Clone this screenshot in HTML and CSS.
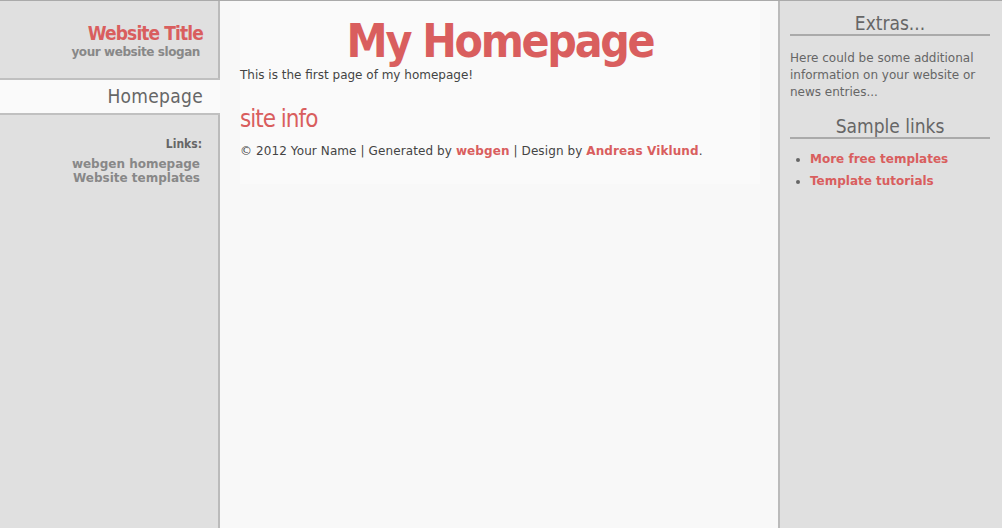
FILE: index.html
```html
<!DOCTYPE html>
<html>
<head>
<meta charset="utf-8">
<title>My Homepage</title>
<link rel="stylesheet" href="styles.css">
</head>
<body>
<div class="page">
  <aside class="left">
    <header class="brand">
      <div class="site-title">Website Title</div>
      <div class="slogan">your website slogan</div>
    </header>
    <nav class="menu">
      <a class="menu-item active" href="#">Homepage</a>
    </nav>
    <div class="links">
      <div class="links-title">Links:</div>
      <a href="#">webgen homepage</a>
      <a href="#">Website templates</a>
    </div>
  </aside>
  <main class="center">
    <div class="content">
      <h1 class="page-title">My Homepage</h1>
      <p class="intro">This is the first page of my homepage!</p>
      <h2 class="section-title">site info</h2>
      <p class="footer">© 2012 Your Name | Generated by <a href="#">webgen</a> | Design by <a href="#">Andreas Viklund</a>.</p>
    </div>
  </main>
  <aside class="right">
    <h3 class="side-title">Extras...</h3>
    <p class="side-text">Here could be some additional information on your website or news entries...</p>
    <h3 class="side-title">Sample links</h3>
    <ul class="side-list">
      <li><a href="#">More free templates</a></li>
      <li><a href="#">Template tutorials</a></li>
    </ul>
  </aside>
</div>
</body>
</html>
```
FILE: styles.css
```css
html, body {
  margin: 0;
  padding: 0;
  height: 100%;
}
body {
  font-family: "DejaVu Sans", Verdana, sans-serif;
  font-size: 12px;
  color: #444;
  background: #f8f8f8;
}
a {
  text-decoration: none;
}
.page {
  display: flex;
  height: 528px;
  border-top: 1px solid #aaa;
  box-sizing: border-box;
}
.left {
  width: 220px;
  flex: none;
  background: #e0e0e0;
  display: flex;
  flex-direction: column;
}
.brand {
  height: 77px;
  border-right: 2px solid #bbb;
  text-align: right;
  padding-right: 15px;
  box-sizing: border-box;
  padding-top: 21px;
}
.site-title {
  font-family: "DejaVu Sans Condensed", "DejaVu Sans", sans-serif;
  font-weight: bold;
  font-size: 19px;
  letter-spacing: -0.9px;
  color: #d95e5e;
  line-height: 22px;
}
.slogan {
  font-weight: bold;
  font-size: 12px;
  letter-spacing: -0.42px;
  color: #888;
  padding-right: 3px;
  line-height: 16px;
}
.menu {
  border-top: 2px solid #c0c0c0;
  border-bottom: 2px solid #c0c0c0;
  background: #fafafa;
}
.menu-item {
  display: block;
  height: 33px;
  line-height: 33px;
  text-align: right;
  padding-right: 17px;
  font-family: "DejaVu Sans Condensed", "DejaVu Sans", sans-serif;
  font-size: 19px;
  letter-spacing: 0.3px;
  color: #666;
}
.links {
  flex: 1;
  border-right: 2px solid #bbb;
  text-align: right;
  padding: 22px 18px 0 0;
  display: flex;
  flex-direction: column;
}
.links-title {
  font-family: "DejaVu Sans Condensed", "DejaVu Sans", sans-serif;
  font-weight: bold;
  font-size: 12px;
  color: #666;
  margin-right: -2px;
  line-height: 15px;
  margin-bottom: 5px;
}
.links a {
  font-weight: bold;
  color: #888;
  font-size: 12px;
  line-height: 14px;
}
.center {
  flex: 1;
  background: #f8f8f8;
  padding: 0 18px 0 20px;
}
.content {
  background: #fafafa;
  height: 183px;
  box-sizing: border-box;
}
.page-title {
  margin: 0;
  padding-top: 15px;
  text-align: center;
  font-family: "DejaVu Sans Condensed", "DejaVu Sans", sans-serif;
  font-size: 46px;
  font-weight: bold;
  letter-spacing: -2.3px;
  color: #d95e5e;
  line-height: 50px;
}
.intro {
  margin: 0;
  line-height: 18px;
}
.section-title {
  margin: 20px 0 0;
  font-weight: normal;
  font-family: "DejaVu Sans Condensed", "DejaVu Sans", sans-serif;
  font-size: 24px;
  letter-spacing: -1px;
  color: #d95e5e;
  line-height: 30px;
}
.footer {
  margin: 8px 0 0;
  line-height: 18px;
  letter-spacing: 0.1px;
}
.footer a, .side-list a {
  color: #d95e5e;
  font-weight: bold;
}
.right {
  width: 224px;
  flex: none;
  background: #e0e0e0;
  border-left: 2px solid #bbb;
  box-sizing: border-box;
  padding: 0 12px 0 10px;
}
.side-title {
  margin: 0;
  font-weight: normal;
  font-family: "DejaVu Sans Condensed", "DejaVu Sans", sans-serif;
  font-size: 19px;
  color: #666;
  text-align: center;
  border-bottom: 2px solid #aaa;
  line-height: 22px;
  padding-top: 11px;
}
.side-text {
  color: #666;
  line-height: 17px;
  margin: 14px 0 0;
}
.side-text + .side-title {
  padding-top: 14px;
}
.side-list {
  margin: 9px 0 0;
  padding-left: 20px;
}
.side-list li {
  color: #666;
  line-height: 22px;
}
```
